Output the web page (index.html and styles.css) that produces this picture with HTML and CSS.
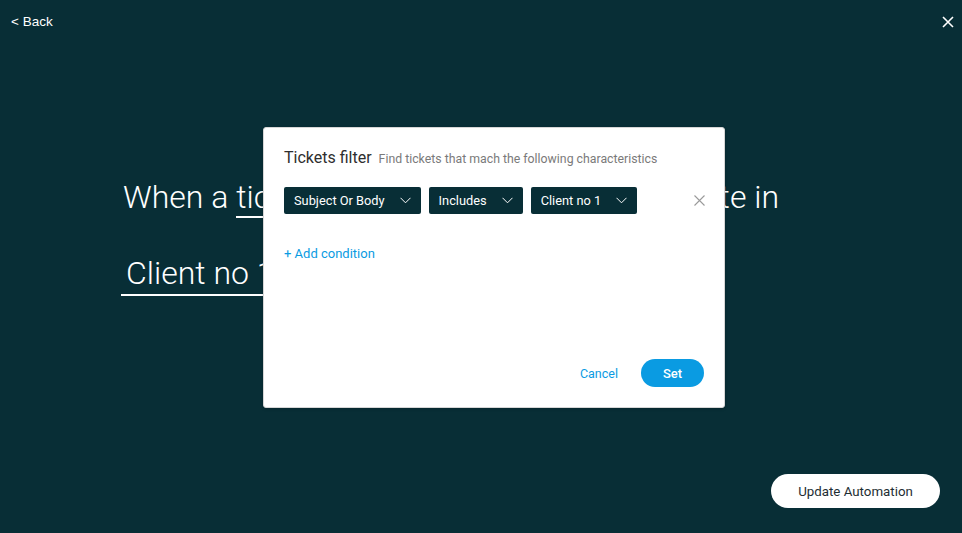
FILE: index.html
```html
<!doctype html>
<html lang="en">
  <head>
    <meta charset="UTF-8" />
    <title>Automation - Tickets filter</title>
    <link rel="stylesheet" href="styles.css">
  </head>
  <body>
    <div class="page">
      <header class="topbar">
        <a class="back-link" href="#">&lt; Back</a>
        <button class="close-page" aria-label="Close">
          <svg width="12" height="12" viewBox="0 0 12 12">
            <path d="M1 1 L11 11 M11 1 L1 11" stroke="#fff" stroke-width="1.6" fill="none" />
          </svg>
        </button>
      </header>

      <!-- Automation sentence -->
      <main class="sentence">
        <div class="sentence-line">
          When a&nbsp;<span class="field">ticket is created</span>, mark its ticket state in
        </div>
        <div class="sentence-line">
          <span class="field field-pad">Client no 1 workspace</span>
        </div>
      </main>

      <footer class="page-footer">
        <button class="update-btn">Update Automation</button>
      </footer>
    </div>

    <!-- Filter dialog -->
    <div class="modal">
      <div class="modal-head">
        <h2>Tickets filter</h2>
        <span class="modal-sub">Find tickets that mach the following characteristics</span>
      </div>

      <div class="condition">
        <div class="select">
          <span>Subject Or Body</span>
          <svg class="chevron" width="11" height="7" viewBox="0 0 11 7"><path d="M0.5 0.8 L5.5 5.8 L10.5 0.8" /></svg>
        </div>
        <div class="select">
          <span>Includes</span>
          <svg class="chevron" width="11" height="7" viewBox="0 0 11 7"><path d="M0.5 0.8 L5.5 5.8 L10.5 0.8" /></svg>
        </div>
        <div class="select">
          <span>Client no 1</span>
          <svg class="chevron" width="11" height="7" viewBox="0 0 11 7"><path d="M0.5 0.8 L5.5 5.8 L10.5 0.8" /></svg>
        </div>
        <button class="remove" aria-label="Remove condition">
          <svg width="11" height="11" viewBox="0 0 11 11">
            <path d="M0.5 0.5 L10.5 10.5 M10.5 0.5 L0.5 10.5" stroke="#9a9a9a" stroke-width="1.1" fill="none" />
          </svg>
        </button>
      </div>

      <a class="add-link" href="#">+ Add condition</a>

      <div class="modal-actions">
        <button class="cancel-btn">Cancel</button>
        <button class="set-btn">Set</button>
      </div>
    </div>
  </body>
</html>
```

FILE: styles.css
```css
:root {
  --bg-color: #082e36;
  --blue: #0a9be2;
  --muted: #7a7a7a;
}

html,
body {
  margin: 0;
  height: 100%;
}

body {
  background: var(--bg-color);
  font-family: Roboto, "Liberation Sans", sans-serif;
  color: #fff;
  overflow: hidden;
}

button {
  font-family: inherit;
  border: none;
  background: none;
  cursor: pointer;
  padding: 0;
}

.page {
  height: 533px;
  display: flex;
  flex-direction: column;
}

/* Top bar */
.topbar {
  display: flex;
  justify-content: space-between;
  align-items: center;
  height: 44px;
  padding: 0 8px 0 11px;
}

.back-link {
  color: #fff;
  text-decoration: none;
  font-family: "Liberation Sans", Arial, sans-serif;
  font-size: 13.5px;
  line-height: 20px;
}

.close-page {
  width: 12px;
  height: 12px;
  display: flex;
}

/* Sentence */
.sentence {
  flex: 1;
  padding: 134px 0 0 123px;
  font-size: 32px;
  font-weight: 300;
  white-space: nowrap;
}

.sentence-line {
  display: flex;
  align-items: flex-start;
  line-height: 38px;
  margin-bottom: 34px;
}

.field {
  display: inline-block;
  border-bottom: 2px solid #fff;
}

.field-pad {
  margin-left: -2px;
  padding-left: 5px;
  line-height: 42px;
}

/* Footer */
.page-footer {
  display: flex;
  justify-content: flex-end;
  padding: 0 22px 25px 0;
}

.update-btn {
  background: #fff;
  color: #1e2e33;
  font-size: 13.3px;
  width: 169px;
  height: 34px;
  border-radius: 17px;
}

/* Dialog */
.modal {
  position: absolute;
  left: 263px;
  top: 127px;
  width: 420px;
  height: 239px;
  padding: 20px;
  background: #fff;
  border: 1px solid #d6d6d6;
  border-radius: 3px;
  color: #333;
  display: flex;
  flex-direction: column;
  box-shadow: 0 1px 3px rgba(0, 0, 0, 0.2);
}

.modal-head {
  display: flex;
  align-items: baseline;
  line-height: 20px;
}

.modal-head h2 {
  margin: 0;
  font-size: 16px;
  font-weight: 400;
  color: #2e2e2e;
}

.modal-sub {
  margin-left: 7px;
  font-size: 12.3px;
  color: var(--muted);
}

.condition {
  display: flex;
  align-items: center;
  gap: 8px;
  margin-top: 18px;
}

.select {
  display: flex;
  align-items: center;
  gap: 15px;
  height: 27px;
  padding: 0 10px;
  background: var(--bg-color);
  color: #fff;
  font-size: 12.8px;
  border-radius: 2px;
}

.chevron path {
  fill: none;
  stroke: #fff;
  stroke-width: 1;
}

.remove {
  margin-left: auto;
  margin-right: -1px;
  display: flex;
}

.add-link {
  margin-top: 32px;
  align-self: flex-start;
  color: var(--blue);
  text-decoration: none;
  font-size: 13px;
  line-height: 16px;
}

.modal-actions {
  margin-top: auto;
  display: flex;
  justify-content: flex-end;
  align-items: center;
  gap: 23px;
}

.cancel-btn {
  color: var(--blue);
  font-size: 12.5px;
}

.set-btn {
  width: 63px;
  height: 28px;
  border-radius: 14px;
  background: var(--blue);
  color: #fff;
  font-size: 13px;
  font-weight: 500;
}
```
